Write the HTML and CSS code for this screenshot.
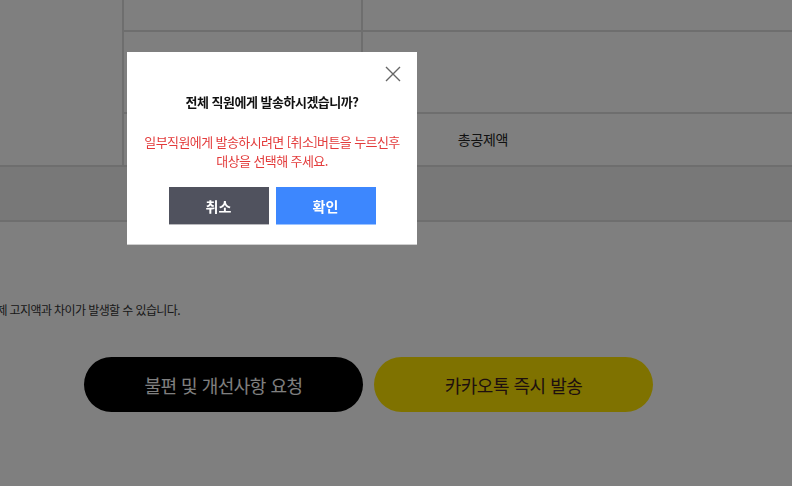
FILE: index.html
```html
<!DOCTYPE html>
<html lang="ko">
	<head>
		<meta charset="UTF-8" />
		<meta name="viewport" content="width=device-width, initial-scale=1.0" />
		<title>급여명세서 발송</title>
		<link rel="stylesheet" href="styles.css">
	</head>
	<body>
		<div class="page">
			<div class="summary">
				<div class="side"></div>
				<div class="rows">
					<div class="row row-1">
						<div class="cell cell-first"></div>
						<div class="cell"></div>
					</div>
					<div class="row row-2">
						<div class="cell cell-first"></div>
						<div class="cell"></div>
					</div>
					<div class="row row-3">
						<div class="cell cell-first"></div>
						<div class="cell cell-label">총공제액</div>
					</div>
				</div>
			</div>
			<div class="band"></div>

			<div class="notice">
				<span>※ 4대보험료는 실제 고지액과 차이가 발생할 수 있습니다.</span>
			</div>

			<div class="actions">
				<a href="#" class="pill pill-dark">불편 및 개선사항 요청</a>
				<a href="#" class="pill pill-kakao">카카오톡 즉시 발송</a>
			</div>
		</div>

		<div class="dim"></div>

		<div class="modal">
			<button class="modal-close" type="button" aria-label="닫기">
				<svg width="16" height="16" viewBox="0 0 16 16">
					<path d="M1 1 L15 15 M15 1 L1 15" stroke="#666" stroke-width="1.4" fill="none" />
				</svg>
			</button>
			<p class="modal-title">전체 직원에게 발송하시겠습니까?</p>
			<p class="modal-desc">일부직원에게 발송하시려면 [취소]버튼을 누르신후<br />대상을 선택해 주세요.</p>
			<div class="modal-buttons">
				<button type="button" class="modal-btn btn-cancel">취소</button>
				<button type="button" class="modal-btn btn-ok">확인</button>
			</div>
		</div>
	</body>
</html>
```

FILE: styles.css
```css
body {
	margin: 0;
	width: 792px;
	height: 486px;
	overflow: hidden;
	background: #fff;
	font-family: 'Noto Sans CJK KR', 'Noto Sans', sans-serif;
	color: #333;
}

.page {
	width: 792px;
}

/* summary table */
.summary {
	display: flex;
	height: 165px;
	border-bottom: 2px solid #dcdcdc;
}
.side {
	width: 122px;
	border-right: 2px solid #dcdcdc;
}
.rows {
	flex: 1;
	display: flex;
	flex-direction: column;
}
.row {
	display: flex;
}
.row-1 {
	height: 30px;
	border-bottom: 2px solid #dcdcdc;
}
.row-2 {
	height: 80px;
	border-bottom: 2px solid #dcdcdc;
}
.row-3 {
	flex: 1;
}
.cell-first {
	width: 237px;
	border-right: 2px solid #dcdcdc;
}
.cell-label {
	width: 240px;
	display: flex;
	align-items: center;
	justify-content: center;
	font-size: 14px;
	letter-spacing: -0.3px;
	color: #222;
	padding-bottom: 2px;
}

.band {
	height: 53px;
	background: #f1f1f1;
	border-bottom: 2px solid #dcdcdc;
}

.notice {
	width: 180px;
	margin-top: 80px;
	display: flex;
	justify-content: flex-end;
	white-space: nowrap;
	font-size: 12px;
	line-height: 16px;
	letter-spacing: -0.6px;
	color: #333;
}

.actions {
	display: flex;
	gap: 11px;
	padding-left: 84px;
	margin-top: 39px;
}
.pill {
	width: 279px;
	height: 55px;
	border-radius: 28px;
	display: flex;
	align-items: center;
	justify-content: center;
	font-size: 18px;
	letter-spacing: -0.5px;
	text-decoration: none;
}
.pill-dark {
	background: #000;
	color: #fff;
}
.pill-kakao {
	background: #fee500;
	color: #3c1e1e;
}

/* dialog */
.dim {
	position: fixed;
	inset: 0;
	background: rgba(0, 0, 0, 0.5);
}

.modal {
	position: absolute;
	left: 127px;
	top: 52px;
	width: 290px;
	height: 192px;
	box-sizing: border-box;
	padding-top: 41px;
	background: #fff;
	box-shadow: 0 1px 0 #cfcfcf;
	text-align: center;
}
.modal-close {
	position: absolute;
	top: 14px;
	right: 16px;
	width: 16px;
	height: 16px;
	padding: 0;
	border: none;
	background: none;
	cursor: pointer;
}
.modal-close svg {
	display: block;
}
.modal-title {
	margin: 0;
	font-size: 13px;
	line-height: 18px;
	font-weight: bold;
	letter-spacing: -0.5px;
	color: #111;
}
.modal-desc {
	margin: 21px 0 0;
	font-size: 13px;
	line-height: 19px;
	letter-spacing: -0.6px;
	color: #e33b3b;
}
.modal-buttons {
	display: flex;
	justify-content: center;
	gap: 7px;
	margin-top: 17px;
}
.modal-btn {
	width: 100px;
	height: 38px;
	border: none;
	padding: 0;
	font-family: inherit;
	font-size: 14px;
	font-weight: bold;
	color: #fff;
	cursor: pointer;
}
.btn-cancel {
	background: #50525e;
	border-bottom: 1px solid #b9b9bd;
}
.btn-ok {
	background: #3d87fe;
	border-bottom: 1px solid #9cc3ff;
}
```
